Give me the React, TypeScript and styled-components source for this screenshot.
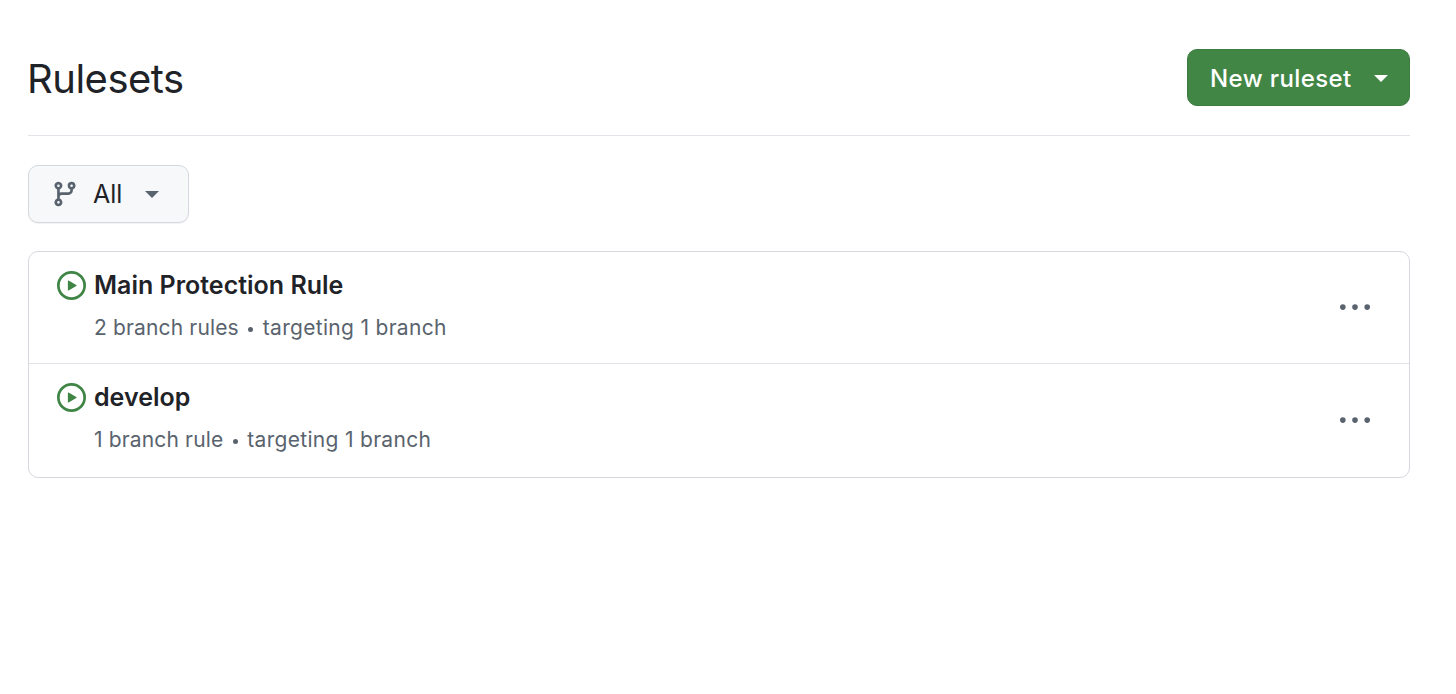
import { createGlobalStyle, styled } from "styled-components";

const GlobalStyle = createGlobalStyle`
  html, body {
    margin: 0;
    background: #ffffff;
    font-family: Inter, "Liberation Sans", sans-serif;
    color: #1f2328;
  }
`;

const Page = styled.div`
  padding: 49px 46px 0 28px;
`;

const Header = styled.header`
  display: flex;
  align-items: center;
  justify-content: space-between;
  padding-bottom: 29px;
  border-bottom: 1px solid #e1e4e8;
`;

const Title = styled.h1`
  margin: 0 0 -2px -1px;
  font-size: 40px;
  line-height: 59px;
  font-weight: 400;
  letter-spacing: -0.5px;
`;

const PrimaryButton = styled.button`
  display: flex;
  align-items: center;
  gap: 22px;
  height: 57px;
  width: 223px;
  padding: 2px 22px 0;
  box-sizing: border-box;
  background: #428646;
  border: 1px solid #3c7b40;
  border-radius: 10px;
  color: #ffffff;
  font-family: inherit;
  font-size: 24px;
  font-weight: 500;
  letter-spacing: 0.4px;
  white-space: nowrap;
`;

const FilterRow = styled.div`
  padding: 29px 0 28px;
`;

const FilterButton = styled.button`
  display: flex;
  align-items: center;
  width: 161px;
  height: 58px;
  padding: 0 0 0 22px;
  box-sizing: border-box;
  background: #f6f8fa;
  border: 1px solid #d5d9de;
  border-radius: 10px;
  box-shadow: 0 1px 1px rgba(31, 35, 40, 0.06);
  color: #1f2328;
  font-family: inherit;
  font-size: 25px;
  font-weight: 400;
`;

const FilterLabel = styled.span`
  margin: 0 23px 0 14px;
`;

const List = styled.div`
  border: 1px solid #d5d9de;
  border-radius: 10px;
`;

const Row = styled.div`
  display: flex;
  align-items: center;
  justify-content: space-between;
  height: 111px;
  box-sizing: border-box;
  padding: 0 39px 0 28px;

  & + & {
    border-top: 1px solid #e1e4e8;
    height: 114px;
  }
`;

const RowBody = styled.div`
  display: flex;
  flex-direction: column;
  align-self: flex-start;
  gap: 14px;
  padding-top: 18px;
`;

const RowTitle = styled.div`
  display: flex;
  align-items: center;
  gap: 8px;
  font-size: 25px;
  line-height: 30px;
  font-weight: 600;
`;

const RowMeta = styled.div`
  display: flex;
  align-items: center;
  gap: 9.5px;
  padding-left: 37px;
  font-size: 21px;
  line-height: 28px;
  letter-spacing: 0.15px;
  color: #59636e;
`;

const Target = styled.span`
  letter-spacing: 0.3px;
`;

const Dot = styled.span`
  width: 5px;
  height: 5px;
  margin-top: 2px;
  border-radius: 50%;
  background: #59636e;
`;

const Caret = styled.span<{ $color: string }>`
  width: 0;
  height: 0;
  border-style: solid;
  border-width: 7px 7.5px 0;
  border-color: ${(p) => p.$color} transparent transparent;
`;

const Octicon = styled.svg<{ $color: string }>`
  flex: none;
  fill: ${(p) => p.$color};
`;

const rules = [
  { name: "Main Protection Rule", count: "2 branch rules" },
  { name: "develop", count: "1 branch rule" },
];

export default function App() {
  return (
    <Page>
      <GlobalStyle />
      <Header>
        <Title>Rulesets</Title>
        <PrimaryButton type="button">
          New ruleset
          <Caret $color="#ffffff" />
        </PrimaryButton>
      </Header>
      <FilterRow>
        <FilterButton type="button">
          <Octicon $color="#59636e" width="28" height="28" viewBox="0 0 16 16">
            <path d="M9.5 3.25a2.25 2.25 0 1 1 3 2.122V6A2.5 2.5 0 0 1 10 8.5H6a1 1 0 0 0-1 1v1.128a2.251 2.251 0 1 1-1.5 0V5.372a2.25 2.25 0 1 1 1.5 0v1.836A2.493 2.493 0 0 1 6 7h4a1 1 0 0 0 1-1v-.628A2.25 2.25 0 0 1 9.5 3.25Zm-6 0a.75.75 0 1 0 1.5 0 .75.75 0 0 0-1.5 0Zm8.25-.75a.75.75 0 1 0 0 1.5.75.75 0 0 0 0-1.5ZM4.25 12a.75.75 0 1 0 0 1.5.75.75 0 0 0 0-1.5Z" />
          </Octicon>
          <FilterLabel>All</FilterLabel>
          <Caret $color="#59636e" />
        </FilterButton>
      </FilterRow>
      <List>
        {rules.map((rule) => (
          <Row key={rule.name}>
            <RowBody>
              <RowTitle>
                <Octicon $color="#3f8545" width="29" height="29" viewBox="0 0 16 16">
                  <path d="M8 0a8 8 0 1 1 0 16A8 8 0 0 1 8 0ZM1.5 8a6.5 6.5 0 1 0 13 0 6.5 6.5 0 0 0-13 0Zm4.879-2.773 4.264 2.559a.25.25 0 0 1 0 .428l-4.264 2.559A.25.25 0 0 1 6 10.559V5.442a.25.25 0 0 1 .379-.215Z" />
                </Octicon>
                {rule.name}
              </RowTitle>
              <RowMeta>
                {rule.count}
                <Dot />
                <Target>targeting 1 branch</Target>
              </RowMeta>
            </RowBody>
            <Octicon $color="#59636e" width="30" height="30" viewBox="0 0 16 16">
              <path d="M8 9a1.5 1.5 0 1 0 0-3 1.5 1.5 0 0 0 0 3ZM1.5 9a1.5 1.5 0 1 0 0-3 1.5 1.5 0 0 0 0 3Zm13 0a1.5 1.5 0 1 0 0-3 1.5 1.5 0 0 0 0 3Z" />
            </Octicon>
          </Row>
        ))}
      </List>
    </Page>
  );
}
